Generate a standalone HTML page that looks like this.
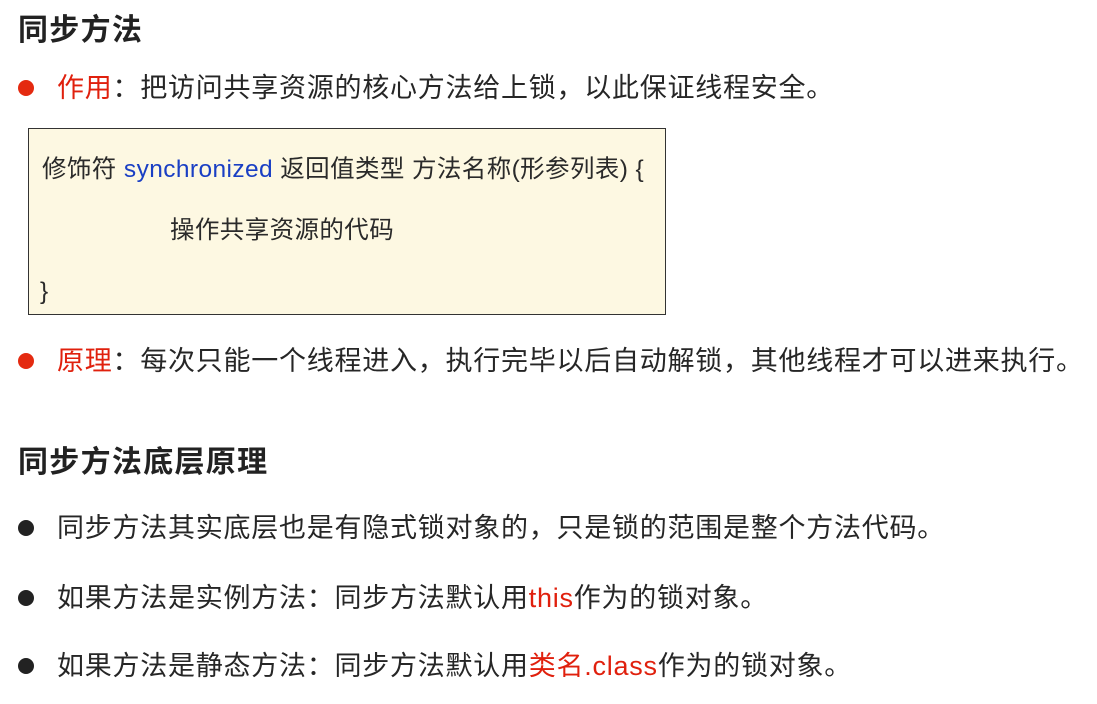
<!DOCTYPE html>
<html><head><meta charset="utf-8"><style>
body{margin:0;width:1097px;height:704px;background:#fff;position:relative;overflow:hidden;font-family:"Liberation Sans","Noto Sans CJK SC",sans-serif;color:#262626}
.a{position:absolute;white-space:nowrap}
h{position:absolute;font-weight:bold;font-size:30px;letter-spacing:1.3px;color:#222;white-space:nowrap}
.t{font-size:27px;letter-spacing:0.75px;line-height:30px}
.dot{position:absolute;width:16px;height:16px;border-radius:50%}
.r{color:#e0200d}
.box{position:absolute;left:28px;top:128px;width:636px;height:185px;border:1px solid #333;background:#fdf8e2}
.c{font-size:24.5px;line-height:28px;color:#2a2a2a;letter-spacing:0.4px}
</style></head><body>
<h style="left:18px;top:5px">同步方法</h>
<div class="dot" style="left:18px;top:80px;background:#e42a10"></div>
<div class="a t" style="left:57px;top:73px"><span class="r">作用</span>：把访问共享资源的核心方法给上锁，以此保证线程安全。</div>
<div class="box"></div>
<div class="a c" style="left:42px;top:156px">修饰符 <span style="color:#1a3fc4">synchronized</span> 返回值类型 方法名称(形参列表) {</div>
<div class="a c" style="left:170px;top:217px">操作共享资源的代码</div>
<div class="a c" style="left:40px;top:278px">}</div>
<div class="dot" style="left:18px;top:353px;background:#e42a10"></div>
<div class="a t" style="left:57px;top:346px"><span class="r">原理</span>：每次只能一个线程进入，执行完毕以后自动解锁，其他线程才可以进来执行。</div>
<h style="left:18px;top:437px">同步方法底层原理</h>
<div class="dot" style="left:18px;top:520px;background:#222"></div>
<div class="a t" style="left:57px;top:513px">同步方法其实底层也是有隐式锁对象的，只是锁的范围是整个方法代码。</div>
<div class="dot" style="left:18px;top:590px;background:#222"></div>
<div class="a t" style="left:57px;top:583px">如果方法是实例方法：同步方法默认用<span class="r">this</span>作为的锁对象。</div>
<div class="dot" style="left:18px;top:658px;background:#222"></div>
<div class="a t" style="left:57px;top:651px">如果方法是静态方法：同步方法默认用<span class="r">类名.class</span>作为的锁对象。</div>
</body></html>
